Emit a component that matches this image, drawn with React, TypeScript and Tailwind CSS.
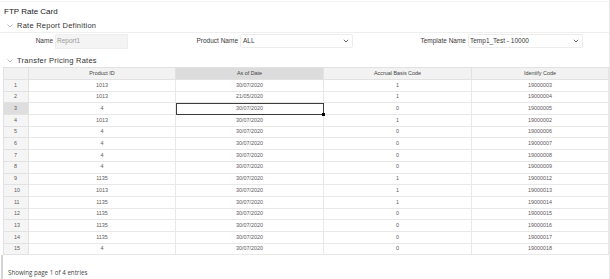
import React from "react";

const rows: string[][] = [
  ["1013", "30/07/2020", "1", "19000003"],
  ["1013", "21/05/2020", "1", "19000004"],
  ["4", "30/07/2020", "0", "19000005"],
  ["1013", "30/07/2020", "1", "19000002"],
  ["4", "30/07/2020", "0", "19000006"],
  ["4", "30/07/2020", "0", "19000007"],
  ["4", "30/07/2020", "0", "19000008"],
  ["4", "30/07/2020", "0", "19000009"],
  ["1135", "30/07/2020", "1", "19000012"],
  ["1013", "30/07/2020", "1", "19000013"],
  ["1135", "30/07/2020", "1", "19000014"],
  ["1135", "30/07/2020", "0", "19000015"],
  ["1135", "30/07/2020", "0", "19000016"],
  ["1135", "30/07/2020", "0", "19000017"],
  ["4", "30/07/2020", "0", "19000018"],
];

function Chevron() {
  return (
    <svg width="6" height="4" viewBox="0 0 6 4" className="shrink-0">
      <polyline points="0.5,0.5 3,3 5.5,0.5" fill="none" stroke="#a8a8a8" strokeWidth="0.8" />
    </svg>
  );
}

function SelectChevron() {
  return (
    <svg width="6" height="4" viewBox="0 0 6 4" className="shrink-0">
      <polyline points="0.8,0.8 3,3 5.2,0.8" fill="none" stroke="#555" strokeWidth="0.9" />
    </svg>
  );
}

function Section({ title }: { title: string }) {
  return (
    <div className="flex items-center gap-[4px] pl-[7px] h-full">
      <Chevron />
      <span className="text-[7.5px] text-[#333] tracking-[0.25px]">{title}</span>
    </div>
  );
}

export default function App() {
  return (
    <div
      className="w-[610px] h-[279px] bg-white overflow-hidden flex flex-col border-r border-[#e8e8e8]"
      style={{ fontFamily: '"Liberation Sans", Arial, sans-serif' }}
    >
      <div className="h-[1px] mt-[1px] bg-[#f3f3f3]" />
      <div className="h-[3px]" />
      <div className="h-[14px] flex items-center pl-[4px]">
        <span className="text-[8px] text-[#222]">FTP Rate Card</span>
      </div>
      <div className="h-[14px] border-b border-[#efefef]">
        <Section title="Rate Report Definition" />
      </div>
      <div className="h-[16px] flex items-center text-[6.5px] text-[#3a3a3a]">
        <div className="w-[128px] flex justify-end items-center gap-[2px]">
          <span>Name</span>
          <div className="w-[73px] h-[15px] bg-[#f4f4f4] border border-[#eeeeee] flex items-center pl-[1px] text-[#9a9a9a]">
            Report1
          </div>
        </div>
        <div className="w-[225px] flex justify-end items-center gap-[2px]">
          <span>Product Name</span>
          <div className="w-[113px] h-[14px] bg-white border border-[#ececec] rounded-[2px] flex items-center justify-between pl-[2px] pr-[3px]">
            <span>ALL</span>
            <SelectChevron />
          </div>
        </div>
        <div className="w-[230px] flex justify-end items-center gap-[2px]">
          <span>Template Name</span>
          <div className="w-[115px] h-[14px] bg-white border border-[#ececec] rounded-[2px] flex items-center justify-between pl-[1px] pr-[3px]">
            <span>Temp1_Test - 10000</span>
            <SelectChevron />
          </div>
        </div>
      </div>
      <div className="h-[6px]" />
      <div className="h-[12px]">
        <Section title="Transfer Pricing Rates" />
      </div>
      <div className="ml-[3px] w-[605px]">
        <table className="table-fixed border-collapse w-[605px] text-[5.4px] text-[#5a5a5a]">
          <colgroup>
            <col className="w-[25px]" />
            <col className="w-[147px]" />
            <col className="w-[148px]" />
            <col className="w-[148px]" />
            <col className="w-[137px]" />
          </colgroup>
          <thead>
            <tr className="h-[12px]">
              <th className="border border-[#e2e2e2] bg-[#f2f2f2] p-0 font-normal"></th>
              <th className="border border-[#e2e2e2] bg-[#f2f2f2] p-0 font-normal text-[#444]">Product ID</th>
              <th className="border border-[#e2e2e2] bg-[#dcdcdc] p-0 font-normal text-[#444]">As of Date</th>
              <th className="border border-[#e2e2e2] bg-[#f2f2f2] p-0 font-normal text-[#444]">Accrual Basis Code</th>
              <th className="border border-[#e2e2e2] bg-[#f2f2f2] p-0 font-normal text-[#444]">Identify Code</th>
            </tr>
          </thead>
          <tbody>
            {rows.map((r, i) => (
              <tr key={i} className="h-[11.7px]">
                <td
                  className={
                    i === 2
                      ? "border border-[#e2e2e2] bg-[#dedede] p-0 pl-[10px] leading-none"
                      : "border border-[#e2e2e2] bg-[#f5f5f5] p-0 pl-[10px] leading-none"
                  }
                >
                  {i + 1}
                </td>
                <td className="border border-[#e8e8e8] p-0 text-center leading-none">{r[0]}</td>
                <td className="border border-[#e8e8e8] p-0 text-center leading-none relative">
                  {r[1]}
                  {i === 2 && (
                    <>
                      <div className="absolute inset-[-0.5px] border border-[#3c3c3c]" />
                      <div className="absolute right-[-2px] bottom-[-2px] w-[3px] h-[3px] bg-black" />
                    </>
                  )}
                </td>
                <td className="border border-[#e8e8e8] p-0 text-center leading-none">{r[2]}</td>
                <td className="border border-[#e8e8e8] p-0 text-center leading-none">{r[3]}</td>
              </tr>
            ))}
          </tbody>
        </table>
      </div>
      <div className="flex-1 ml-[1px] border-l-[2px] border-[#d4d4d4] flex items-start pt-[13px] pl-[5px]">
        <span className="text-[6.2px] text-[#444]" style={{ fontFamily: '"Open Sans", "Liberation Sans", sans-serif' }}>
          Showing page 1 of 4 entries
        </span>
      </div>
    </div>
  );
}
